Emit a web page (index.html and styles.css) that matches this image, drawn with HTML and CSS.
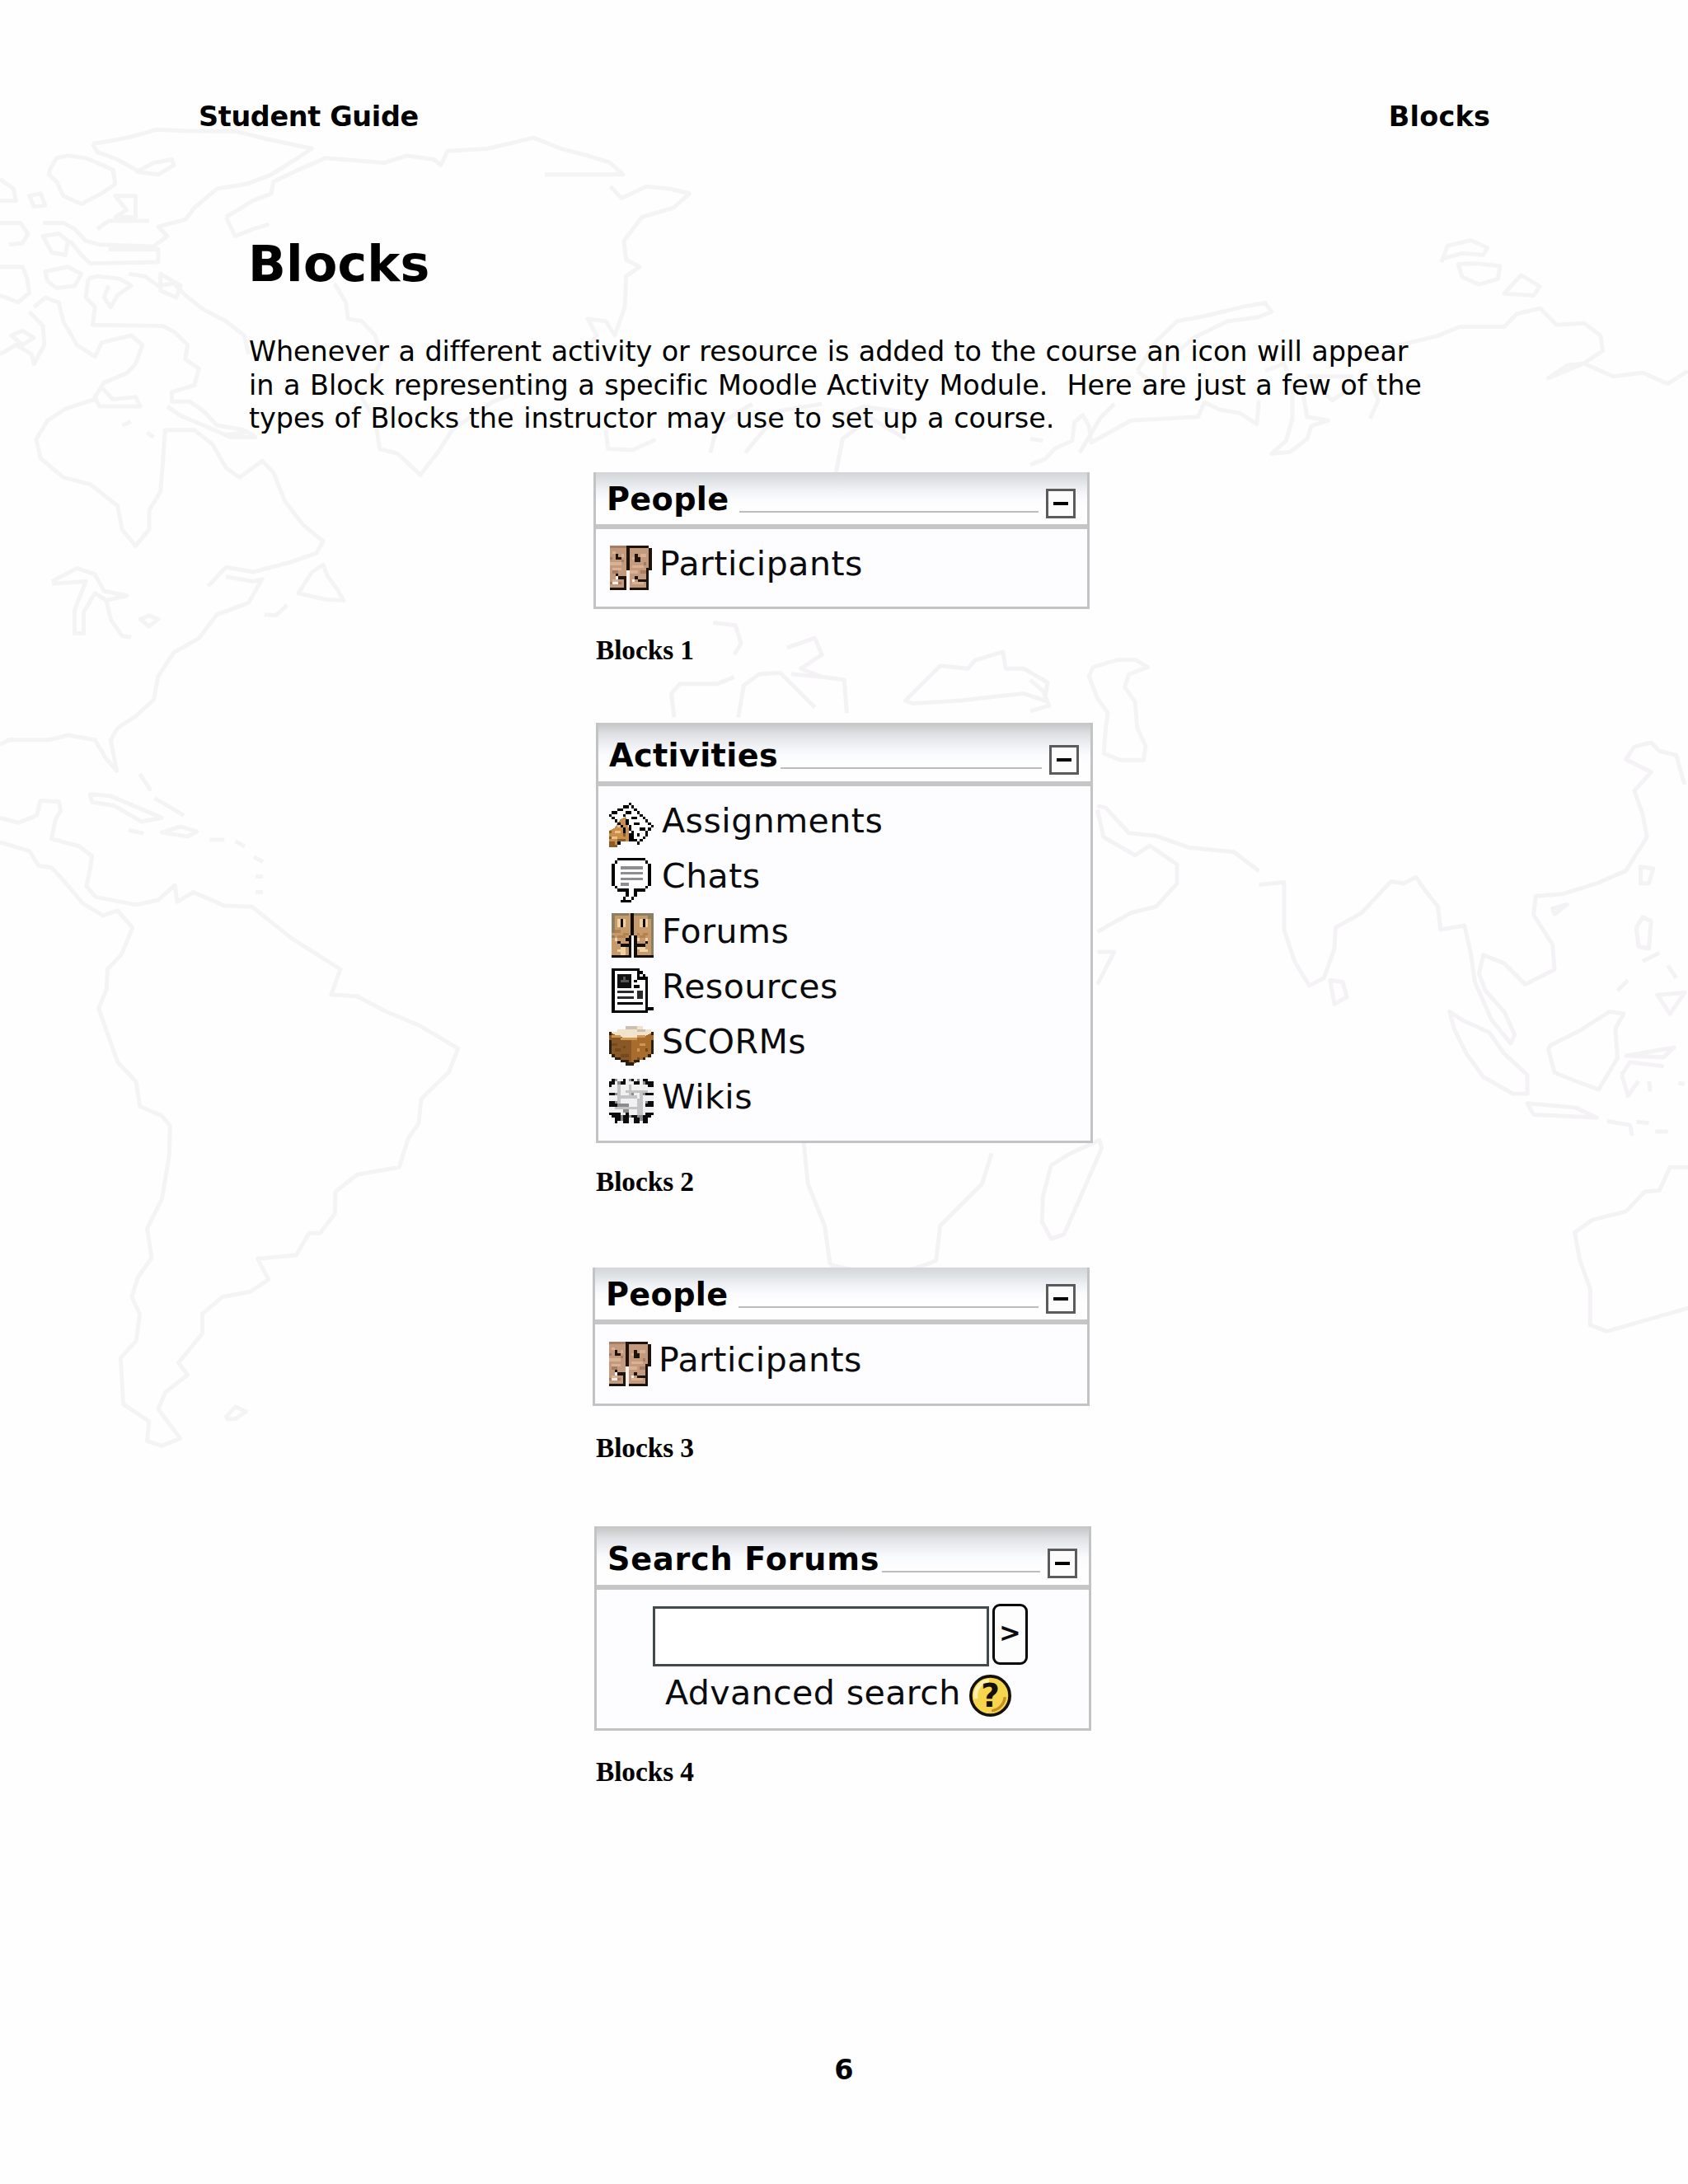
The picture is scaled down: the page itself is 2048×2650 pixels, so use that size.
FILE: index.html
```html
<!DOCTYPE html>
<html lang="en">
<head>
<meta charset="utf-8">
<title>Student Guide - Blocks</title>
<link rel="stylesheet" href="styles.css">
</head>
<body>
<svg class="defs" width="0" height="0" aria-hidden="true">
  <symbol id="i-people" viewBox="0 0 16 16">
    <path fill="#c49a7e" d="M0 0h6v15H0zM7 0h7v15H7z"/>
    <path stroke="#d9b294" d="M1 2.5h1M4 3.5h1M0 6.5h4M1 8.5h3M8 4.5h1M11 3.5h2M8 7.5h4M7 9.5h3M8 13.5h4M1 12.5h2"/>
    <path stroke="#a67c62" d="M0 .5h6M0 4.5h1M4 5.5h1M1 9.5h2M12 6.5h1M11 9.5h2M0 13.5h4"/>
    <path stroke="#fbf1ea" d="M2 11.5h1M1 13.5h2M9 11.5h1M8 12.5h1M6 9.5h1M6 10.5h1M6 11.5h1M6 12.5h1M6 13.5h1M6 14.5h1M6 15.5h1"/>
    <path stroke="#1d120c" d="M6 .5h8M2 3.5h1M2 4.5h2M9 3.5h1M9 4.5h2M9 5.5h2M6.5 0v9M14.5 1v8M13.5 8v8M2 10.5h1M3 11.5h3M5.5 11v5M9 11.5h1M10 12.5h4M0 15.5h6M7 15.5h7"/>
  </symbol>
  <symbol id="i-assign" viewBox="0 0 16 16">
    <path fill="#fff" d="M7 1l8 7-4 6-3-2-7-8z"/>
    <path fill="#c98f4d" d="M0 16v-6l2-1 2-3 2-1 1 4v3l1 1-1 1H4v1H3v1z"/>
    <path stroke="#8b5c28" d="M0 10.5h1M0 12.5h1M0 14.5h2M0 15.5h3M3 13.5h3M5 11.5h1"/>
    <path stroke="#efc088" d="M2 10.5h2M1 12.5h2M3 8.5h1"/>
    <path stroke="#000" d="M7 .5h1M5 1.5h2M8 1.5h1M3 2.5h2M9 2.5h1M1 3.5h2M6 3.5h2M10 3.5h1M0 4.5h1M5 4.5h1M11 4.5h1M1 5.5h1M8 5.5h2M12 5.5h1M2 6.5h1M6 6.5h1M13 6.5h1M3 7.5h1M6 7.5h1M9 7.5h2M14 7.5h1M4 8.5h1M7 8.5h1M15 8.5h1M5 9.5h1M7 9.5h1M11 9.5h2M14 9.5h1M5 10.5h1M8 10.5h1M13 10.5h1M7 11.5h2M10 11.5h1M13 11.5h1M7 12.5h2M12 12.5h1M7 13.5h2M9 13.5h1M11 13.5h1M10 14.5h1M3 14.5h1"/>
  </symbol>
  <symbol id="i-chat" viewBox="0 0 16 16">
    <path fill="#fff" d="M3 1h10v1h1v8h-2v1H9v3H6v-3H3l-1-1V2z"/>
    <path stroke="#8e8e92" d="M4 3.5h8M4 5.5h8M4 7.5h8M4 9.5h3"/>
    <path stroke="#000" d="M3 .5h10M2 1.5h1M13 1.5h1M2 10.5h1M13 10.5h1M3 11.5h4M9 11.5h4M6 12.5h1M9 12.5h1M6 13.5h1M9 13.5h1M5 14.5h1M8 14.5h1M4 15.5h4M1.5 2v8M14.5 2v8"/>
  </symbol>
  <symbol id="i-forum" viewBox="0 0 16 16">
    <path fill="#c69a6b" d="M1 0h15v16H1z"/>
    <path stroke="#8c8062" d="M1 .5h6M9 .5h7M1.5 0v7M15.5 0v15M14 1.5h1M1 8.5h1"/>
    <path stroke="#efd2a3" d="M3.5 2v3M5.5 2v3M11.5 2v3M13.5 2v3M2 9.5h1M4 12.5h2M3 13.5h3M10 12.5h3M11 13.5h3M4 14.5h2M10 9.5h1M13 9.5h1"/>
    <path stroke="#b3824f" d="M2 6.5h2M5 7.5h2M10 7.5h1M12 7.5h2M3 8.5h3M11 8.5h2"/>
    <path stroke="#120c07" d="M4.5 2v3M12.5 2v3M3 10.5h1M4 11.5h3M13 10.5h1M10 11.5h3M6 9.5h1M7.5 8v8M9.5 8v8M1 15.5h6M10 15.5h6"/>
    <path stroke="#120c07" stroke-width="1.4" d="M8.3 0v8"/>
    <path stroke="#fff" d="M8.5 8v8"/>
  </symbol>
  <symbol id="i-res" viewBox="0 0 16 16">
    <path fill="#fff" d="M1 0h10l3 3v12H1z"/>
    <path stroke="#000" d="M1.5 0v16M1 .5h10M10.5 0v3M11 1.5h1M12 2.5h1M10 3.5h4M13.5 3v12M1 15.5h13M13 14.5h3M9 4.5h1M9 6.5h2M3 12.5h9"/>
    <path stroke="#2b2b2d" d="M3 8.5h6M3 10.5h6M10 8.5h2M10 9.5h2M10 10.5h2"/>
    <path fill="#111" d="M3 2h5v5H3z"/>
    <path stroke="#55555a" d="M5 3.5h1M4 4.5h3"/>
  </symbol>
  <symbol id="i-scorm" viewBox="0 0 16 16">
    <path fill="#f3e2ca" d="M0 4V3h3V2h3V1h6v1h3v1h1v1l-8 2z"/>
    <path fill="#8a5826" d="M0 3l2 1 3 1 3 .5V15H7v-1H5v-1H3v-1H1v-1H0z"/>
    <path fill="#a86d2c" d="M16 3l-3 1.5-5 1V15l2-1v-1h2v-1h2v-1h2z"/>
    <path stroke="#cf9850" d="M1 4.5h3M4 5.5h6M10 4.5h3M11 7.5h2M10 9.5h1"/>
    <path stroke="#744a1c" d="M1 7.5h2M2 9.5h2M4 11.5h3M5 8.5h1M13 9.5h1M10 12.5h1"/>
    <path stroke="#2b2010" d="M.5 3v1M.5 6v5M1 11.5h1M2 12.5h2M4 13.5h3M6 14.5h3M9 13.5h2M12 12.5h1M15 3.5h1M15.5 6v5M14 11.5h1"/>
    <path stroke="#cbbfae" d="M6 1.5h4M10 2.5h3"/>
  </symbol>
  <symbol id="i-wiki" viewBox="0 0 16 16">
    <path fill="#f1f1f1" d="M0 2h16v11H0zM1 0h14v3H1zM2 12h12v4H2z"/>
    <path stroke="#c4c4c6" d="M3.5 1v9M7.5 2v5M6 4.5h8M11.5 5v9M2 10.5h8M4 6.5h6M10.5 7v6"/>
    <path stroke="#8b8b8e" d="M2 .5h1M7 .5h1M10 .5h1M3 1.5h1M12 1.5h1M2 5.5h1M12 5.5h1M3 9.5h4M2 8.5h1M13 8.5h1M4 13.5h1M7 13.5h1M10 13.5h2M11 14.5h1M4 14.5h1M8 5.5h1M5 11.5h2"/>
    <path stroke="#0c0c0c" d="M1 .5h1M5 .5h1M8 .5h1M12 .5h2M0 1.5h2M4 1.5h2M9 1.5h2M13 1.5h3M0 2.5h1M14 2.5h2M0 5.5h2M13 5.5h3M0 8.5h2M14 8.5h2M0 9.5h3M13 9.5h3M0 12.5h4M6 12.5h1M13 12.5h3M1 13.5h3M5 13.5h2M8 13.5h2M12 13.5h3M2 14.5h2M5 14.5h2M9 14.5h2M12 14.5h2M2 15.5h1M5 15.5h2M9 15.5h2M12 15.5h2"/>
  </symbol>
</svg>

<svg class="map" viewBox="0 0 2048 2650" aria-hidden="true">
  <!-- North America and Greenland -->
  <g transform="translate(0 120) scale(.5485 .574)">
    <path d="M205 95Q280 85 345 65Q430 70 520 68L590 85L690 105L650 130L600 160L545 180L480 190L430 230L410 255L350 270L370 290L340 312L220 308L190 300L165 275L140 262L95 262M205 95L215 112L260 128L310 155L350 160L385 140L380 128L340 135L300 155M110 150L125 125L150 120L190 125L215 135L250 150L255 180L225 200L180 222L140 205L125 175L108 160ZM65 205L90 200L100 225L75 228ZM0 170L30 190L35 215L0 215M255 205L300 205L300 250L255 250L280 235ZM215 275L240 258L330 258M0 262L45 262L62 285L50 305L20 308M95 290L130 285L150 300L145 330L115 325ZM155 300L180 330L200 348L350 345L350 318L240 318M0 355L50 355L60 380L65 410L40 430L0 415M100 365L150 355L180 370L165 395L125 400L105 385ZM195 380L215 375L265 380L290 395L260 415L245 440L230 420L240 395M195 380L190 420L210 440L205 478L360 480L385 492L415 520L410 550L440 570L430 605L380 620L380 640L420 640L450 660L480 690L540 700L565 715L510 715L450 690L400 670L370 650"/>
    <path d="M285 370L320 375L350 395L385 390L410 415L450 445L500 470L540 500L550 540M355 370L400 395L390 420L355 405ZM75 440L100 420L130 430L140 470L170 520L210 545L225 515L290 500L315 520L300 560L280 580L230 600L210 630L220 650L310 650L300 630L250 635L225 610M65 450L95 480L98 520L75 560L70 540L35 520L0 540M25 500L50 490L75 505L50 520ZM210 635L145 655L105 680L80 720L90 760L140 800L200 815L260 860L270 910L300 945L330 910L330 870L355 830L360 770L365 700L430 700L470 730L500 780L530 800L580 765L605 790L630 850L670 900L715 935L700 960L640 980L560 1000L500 990L480 1010L460 1030"/>
    <path d="M500 1010L560 1020L580 1015L550 1065L480 1090L440 1140L385 1170L350 1220L340 1270L300 1305L260 1330L245 1355L258 1420L235 1395L210 1355L150 1345L110 1355L20 1355L0 1365M660 1045L690 1000L715 985L725 1010L745 1035L760 1060L720 1058ZM585 1090L610 1092L635 1070M115 1020L170 992L210 1005L230 1040L280 1050L235 1060L245 1100L270 1135L290 1138M115 1025L190 1020L165 1080L165 1130L185 1130L185 1085L210 1045L235 1060M310 1100L330 1092L350 1100L330 1115ZM545 705L500 710M325 705L340 715M270 690L290 682"/>
    <!-- Greenland, east side -->
    <path d="M500 250L560 215L600 200L605 175L660 150L720 125L850 135L900 120L960 128L975 140L990 110L1080 105L1180 82L1240 105L1300 120L1350 135L1378 160L1205 160M1350 185L1375 210L1430 185L1480 190L1525 200L1490 230L1420 250L1380 300L1385 340L1415 355L1385 375L1382 440L1360 500L1340 470L1300 465L1320 500L1290 540M500 250L520 290L560 275L595 265M740 390L765 430L770 465L800 470L830 500L845 550L820 600L800 630L830 680L840 740L880 750L930 795L970 745L1000 700L1090 640L1200 600M1340 700L1345 740L1400 742L1450 720"/>
  </g>
  <!-- Central and South America -->
  <g transform="translate(0 850) scale(.4464 .593)">
    <path d="M0 240L50 250L100 235L110 205L160 207L165 225L150 245L140 283L215 298L250 318L245 345L235 380L260 402L370 418L430 408L475 378L482 412L525 392L610 420L685 422L790 485L925 550L900 602L970 605L1045 635L1140 665L1245 712L1220 760L1145 815L1138 865L1110 895L1085 955L970 970L912 1005L910 1050L870 1090L840 1090L805 1135L700 1142L730 1185L680 1210L605 1220L550 1255L550 1295L485 1355L510 1380L450 1415L430 1450L490 1510L440 1525L400 1515L405 1475L335 1440L328 1345L370 1310L380 1255L358 1220L375 1180L412 1140L400 1080L440 1020L460 930L462 870L440 850L380 830L370 780L320 740L268 630L290 590L292 550L330 520L360 465L320 430L280 440L225 415L175 370L140 342L105 338L80 308L0 290M245 192L300 195L440 240L385 248L310 215L250 208ZM440 270L490 258L535 268L510 278ZM380 150L410 185M420 200L500 235M350 265L390 272M570 285L610 285M640 288L665 298M690 320L715 330M695 360L715 360M695 392L715 392M615 1465L640 1445L668 1455L640 1470L618 1470Z"/>
  </g>
  <!-- Northern Eurasia -->
  <g transform="translate(1250 200) scale(.5089 .4464)">
    <path d="M0 815L35 800L60 770L100 750L105 700L125 680L140 710L145 755L240 695L320 690L400 685L415 645L450 665L500 675L540 705L545 640M0 745L30 750M255 560L300 480L350 425L420 410L510 385L560 375L575 400L540 415L470 425L390 470L360 500L320 540L320 590M255 560L300 600M560 560L605 540L625 600L625 690L610 750L575 785L620 780L660 745L670 710L710 695L660 685L650 620M660 575L770 575M880 490L970 465L1025 440L1130 440L1160 405L1215 390L1255 435L1320 430L1360 465L1365 505L1320 540L1235 580L1280 545L1320 540L1390 575L1460 565L1520 595L1568 560M980 265L995 220L1050 205L1090 225L1080 245L1030 240L985 255M1020 270L1060 268L1120 275L1115 310L1070 325L1030 305ZM1130 350L1170 300L1215 330L1200 355ZM680 600L720 640L760 610M810 690L830 640L810 590"/>
    <path d="M150 1365L210 1345L250 1345L280 1365L235 1385L225 1420L250 1460L255 1530L275 1580L270 1618L215 1618L175 1600L180 1530L185 1490L160 1450L140 1390ZM0 1400L30 1430L45 1470L0 1485"/>
  </g>
  <!-- Southern Asia and Australia -->
  <g class="map-warm" transform="translate(1250 850) scale(.5089 .5102)">
    <path d="M160 250L180 255L235 315L300 322L380 350L485 360L545 405M545 438L605 432L605 545L630 620L665 678L700 660L725 590L728 540L790 505L860 430L890 435L920 420L940 450L972 490L978 545L1035 535L1050 600L1060 670L1100 760L1145 815L1155 795L1130 740L1085 690L1070 650L1080 605L1130 625L1180 675L1250 640L1245 580L1200 510L1205 465L1270 460L1350 435L1420 405L1470 325L1460 270L1440 215L1480 170L1420 140L1440 110L1480 100L1500 120L1540 130L1560 200M160 260L175 325L250 368L285 345L350 390L350 435L300 490L240 505L160 550M160 598L200 598L160 675M715 665L745 670L755 705L725 722ZM1000 740L1030 760L1095 790L1130 840L1185 890L1185 935L1150 935L1080 895L1040 840L1010 780ZM1185 958L1300 968L1350 992L1200 985ZM1375 1000L1430 1010L1435 1035M1445 1002L1475 1005M1490 1025L1520 1025M1240 820L1310 785L1380 740L1415 745L1395 780L1400 850L1355 925L1300 905L1250 885L1235 830ZM1245 495L1280 485L1250 508ZM1455 395L1485 400L1475 435L1455 435ZM1445 540L1460 515L1480 525L1475 590L1450 585ZM1460 620L1500 600M1400 690L1425 665M1520 630L1540 660M1495 700L1560 695L1525 745ZM1420 845L1535 825L1510 848ZM1410 890L1430 860L1510 870M1410 890L1425 940L1450 905M1475 905L1478 930M1545 910L1560 912M1568 1110L1525 1110L1500 1165L1465 1168L1420 1215L1340 1235L1298 1265L1310 1330L1335 1400L1335 1485L1375 1500L1568 1445M165 1045L170 1065L120 1180L80 1270L50 1280L28 1240L30 1180L50 1105L90 1080Z"/>
  </g>
  <!-- Europe and Africa -->
  <g class="map-warm" transform="scale(1.69)">
    <path d="M512 447L528 449L532 462L527 470M484 515L482 498L488 491L515 491L527 486M530 515L534 492L545 484L560 483L572 495L585 508M568 484L590 486L606 488L608 512M565 465L585 458L590 470L575 480L590 486M650 503L665 488L675 478L695 480L700 474L720 468L722 480L735 480L752 490L750 503L735 498L715 500L690 503L655 505ZM577 820L580 850L592 880L596 908M596 908Q640 920 672 905L675 880L705 850L712 828M535 325L560 295L590 290M600 340L605 315L625 300L650 315M775 325L790 300L800 290M510 325L515 305L540 290M600 300L620 292L650 296"/>
  </g>
</svg>

<main class="page">
  <header class="running-head"><span>Student Guide</span><span class="chapter">Blocks</span></header>

  <h1>Blocks</h1>
  <p class="intro">Whenever a different activity or resource is added to the course an icon will appear<br><span class="wide">in a Block representing a specific Moodle Activity Module.&nbsp; Here are just a few of the</span><br><span class="wider">types of Blocks the instructor may use to set up a course.</span></p>

  <figure class="fig fig-1">
    <section class="panel">
      <div class="panel-head"><h2>People</h2><i class="rule"></i><span class="toggle"></span></div>
      <ul class="items"><li><svg><use href="#i-people"/></svg><span>Participants</span></li></ul>
    </section>
    <figcaption>Blocks 1</figcaption>
  </figure>

  <figure class="fig fig-2">
    <section class="panel tall">
      <div class="panel-head"><h2>Activities</h2><i class="rule"></i><span class="toggle"></span></div>
      <ul class="items">
        <li><svg><use href="#i-assign"/></svg><span>Assignments</span></li>
        <li><svg><use href="#i-chat"/></svg><span>Chats</span></li>
        <li><svg><use href="#i-forum"/></svg><span>Forums</span></li>
        <li><svg><use href="#i-res"/></svg><span>Resources</span></li>
        <li><svg><use href="#i-scorm"/></svg><span>SCORMs</span></li>
        <li><svg><use href="#i-wiki"/></svg><span>Wikis</span></li>
      </ul>
    </section>
    <figcaption>Blocks 2</figcaption>
  </figure>

  <figure class="fig fig-3">
    <section class="panel">
      <div class="panel-head"><h2>People</h2><i class="rule"></i><span class="toggle"></span></div>
      <ul class="items"><li><svg><use href="#i-people"/></svg><span>Participants</span></li></ul>
    </section>
    <figcaption>Blocks 3</figcaption>
  </figure>

  <figure class="fig fig-4">
    <section class="panel tall">
      <div class="panel-head"><h2>Search Forums</h2><i class="rule"></i><span class="toggle"></span></div>
      <div class="search">
        <div class="search-row"><span class="field"></span><span class="go">&gt;</span></div>
        <div class="advanced"><span>Advanced search</span>
          <svg class="help" viewBox="0 0 15 15"><circle cx="7.5" cy="7.5" r="6.95" fill="#f7d64e" stroke="#14110a" stroke-width="1.1"/><path d="M2.4 8.5A5.3 5.3 0 0 1 7 2.1" stroke="#fff1b0" stroke-width="1.4" fill="none"/><path d="M12.7 8A5.3 5.3 0 0 1 8 12.9" stroke="#c98e22" stroke-width="1" fill="none"/><text x="7.5" y="11.6" text-anchor="middle">?</text></svg>
        </div>
      </div>
    </section>
    <figcaption>Blocks 4</figcaption>
  </figure>

  <footer>6</footer>
</main>
</body>
</html>
```
FILE: styles.css
```css
* { box-sizing: border-box; }
body {
  margin: 0;
  position: relative;
  width: 2048px;
  height: 2650px;
  overflow: hidden;
  background: #fefefe;
  color: #000;
  font-family: "DejaVu Sans", Verdana, sans-serif;
}
.defs { position: absolute; }
symbol path { shape-rendering: crispEdges; }

/* faint world map lying behind the page text */
.map { position: absolute; inset: 0; width: 2048px; height: 2650px; }
.map path {
  fill: none;
  stroke: #f4f4f4;
  stroke-width: 5px;
  stroke-linejoin: round;
  vector-effect: non-scaling-stroke;
}
.map .map-warm path { stroke: #f4f2f5; }

.page {
  position: relative;
  display: flex;
  flex-direction: column;
  height: 2650px;
  padding-top: 122px;
}
.running-head {
  display: flex;
  justify-content: space-between;
  padding: 0 240px 0 241px;
  font-size: 33.46px;
  font-weight: bold;
  line-height: 40px;
  letter-spacing: -.35px;
}
.chapter { letter-spacing: .2px; }
h1 {
  margin: 122px 0 0 301px;
  font-size: 60.2px;
  line-height: 72px;
  letter-spacing: .2px;
}
.intro {
  margin: 51px 0 0 302px;
  font-size: 33.46px;
  line-height: 40.5px;
  white-space: nowrap;
  word-spacing: 1px;
  letter-spacing: -.1px;
}
.wide { letter-spacing: -.05px; }
.wider { letter-spacing: -.03px; }

.fig { margin: 0; }
.fig-1 { margin: 44px 0 0 720px; }
.fig-2 { margin: 69px 0 0 723px; }
.fig-3 { margin: 85px 0 0 719px; }
.fig-4 { margin: 76px 0 0 721px; }
figcaption {
  height: 38px;
  font: bold 33.4px/38px "Liberation Serif", "Times New Roman", serif;
  letter-spacing: -.1px;
}
.fig-1 figcaption { margin: 31px 0 0 3px; }
.fig-2 figcaption { margin: 28px 0 0 0; }
.fig-3 figcaption { margin: 32px 0 0 4px; }
.fig-4 figcaption { margin: 31px 0 0 2px; }

.panel {
  width: 603px;
  border: 3px solid #c3c3c4;
  border-top: 0;
  background: #fdfcfe;
}
.fig-1 .panel { height: 166px; width: 602px; }
.fig-2 .panel { height: 510px; }
.fig-3 .panel { height: 168px; }
.fig-4 .panel { height: 248px; }

.panel-head {
  display: flex;
  align-items: flex-start;
  height: 69px;
  padding: 10px 14px 0 13px;
  border-bottom: 6px solid #c6c6c7;
  background: linear-gradient(#d3d5d8 0, #dfe2e5 10px, #eff1f5 21px, #fbfbfe 32px, #fefefe 42px);
}
.tall .panel-head {
  height: 77px;
  padding-top: 17px;
  background: linear-gradient(#c4c4c6 0, #cfd0d2 6px, #dfe1e4 14px, #eef0f4 27px, #fafbfd 38px, #fefefe 50px);
}
h2 {
  margin: 0;
  font-size: 38.2px;
  line-height: 46px;
  font-weight: bold;
  letter-spacing: .35px;
}
.fig-4 h2 { letter-spacing: .75px; }
.rule {
  flex: 1;
  height: 2px;
  margin: 37px 9px 0 12px;
  background: #bdbdbe;
}
.fig-2 .rule, .fig-4 .rule { margin-left: 3px; }
.toggle {
  width: 36px;
  height: 36px;
  margin-top: 10px;
  border: 3px solid #5b5b5e;
  background: linear-gradient(#000, #000) 6px 13px / 18px 4px no-repeat #fcfcfd;
}

.items {
  margin: 0;
  padding: 20px 0 0 17px;
  list-style: none;
}
.fig-3 .items { padding-top: 21px; }
.fig-2 .items { padding: 20px 0 0 13px; }
.items li {
  display: flex;
  align-items: flex-start;
  height: 67px;
  font-size: 41px;
  line-height: 45px;
  letter-spacing: .5px;
  color: #0b0b0e;
}
.items svg { width: 54px; height: 54px; margin-right: 6px; }
.fig-2 .items svg { margin-right: 10px; }

.search { padding: 17px 0 0 68px; color: #0b0b0e; }
.search-row { display: flex; gap: 4px; }
.field {
  width: 408px;
  height: 73px;
  margin-top: 3px;
  border: 3px solid #434a4c;
  background: #fff;
}
.go {
  width: 43px;
  height: 74px;
  border: 3.5px solid #050505;
  border-radius: 9px;
  background: #fdfdfe;
  font-size: 32px;
  font-weight: bold;
  line-height: 64px;
  text-align: center;
}
.advanced {
  display: flex;
  align-items: flex-start;
  margin: 10px 0 0 15px;
  font-size: 41.2px;
  line-height: 45px;
  letter-spacing: .35px;
}
.help { width: 51px; height: 51px; margin-left: 10px; }
.help text { font: bold 11.5px "DejaVu Sans", sans-serif; letter-spacing: 0; fill: #14100a; }

footer {
  margin-top: auto;
  margin-bottom: 118px;
  font-size: 33.46px;
  font-weight: bold;
  line-height: 40px;
  text-align: center;
}
```
